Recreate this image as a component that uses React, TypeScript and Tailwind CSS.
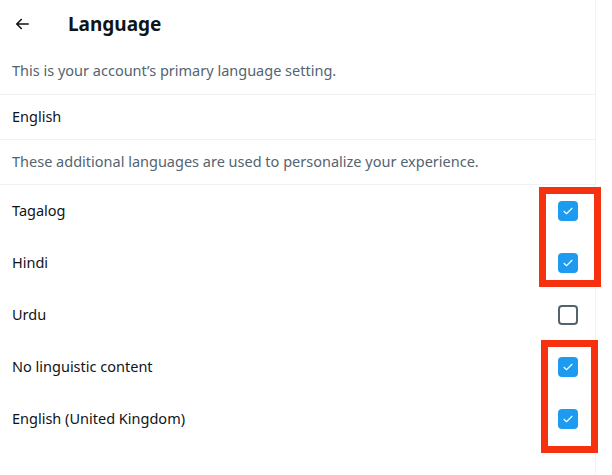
import React from "react";

const langs = [
  { name: "Tagalog", checked: true },
  { name: "Hindi", checked: true },
  { name: "Urdu", checked: false },
  { name: "No linguistic content", checked: true },
  { name: "English (United Kingdom)", checked: true },
];

function Check({ checked }: { checked: boolean }) {
  if (checked) {
    return (
      <div className="w-[20px] h-[20px] rounded-[4px] bg-[#1d9bf0] flex items-center justify-center">
        <svg width="12" height="12" viewBox="0 0 24 24" fill="none" stroke="white" strokeWidth="2.2" strokeLinecap="round" strokeLinejoin="round">
          <path d="M4 12.5l5 5L20 6.5" />
        </svg>
      </div>
    );
  }
  return <div className="w-[20px] h-[20px] rounded-[4px] border-2 border-[#536471]" />;
}

export default function App() {
  return (
    <div className="relative w-[612px] h-[475px] bg-white overflow-hidden" style={{ fontFamily: '"Noto Sans", "Open Sans", sans-serif' }}>
      <div className="w-[596px] h-full border-r border-[#eff3f4]">
        <div className="h-[48px] flex items-center px-[12px]">
          <div className="w-[20px] flex items-center justify-center">
            <svg width="18" height="18" viewBox="0 0 24 24" fill="#0f1419">
              <path d="M7.414 13l5.043 5.04-1.414 1.42L3.586 12l7.457-7.46 1.414 1.42L7.414 11H21v2H7.414z" />
            </svg>
          </div>
          <div className="ml-[36px] text-[19px] font-bold text-[#0f1419] leading-[24px]">Language</div>
        </div>
        <div className="h-[47px] flex items-center px-[12px] border-b border-[#eff3f4] text-[14.5px] text-[#536471]">
          This is your account’s primary language setting.
        </div>
        <div className="h-[45px] flex items-center px-[12px] border-b border-[#eff3f4] text-[14.5px] text-[#0f1419]">
          English
        </div>
        <div className="h-[45px] flex items-center px-[12px] border-b border-[#eff3f4] text-[14.5px] text-[#536471]">
          These additional languages are used to personalize your experience.
        </div>
        {langs.map((l) => (
          <div key={l.name} className="h-[52px] flex items-center justify-between pl-[12px] pr-[17px] text-[14.5px] text-[#0f1419]">
            <span className="-mt-[1px]">{l.name}</span>
            <Check checked={l.checked} />
          </div>
        ))}
      </div>
      <div className="absolute left-[539px] top-[187px] w-[62px] h-[100px] border-[7px] border-[#f5310f]" />
      <div className="absolute left-[541px] top-[340px] w-[57px] h-[113px] border-[7px] border-[#f5310f]" />
    </div>
  );
}
